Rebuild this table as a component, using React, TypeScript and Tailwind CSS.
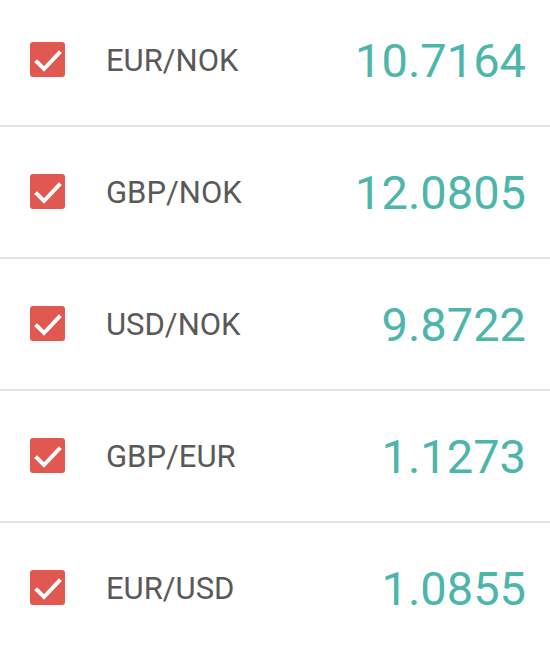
const rates = [
  { pair: "EUR/NOK", value: "10.7164" },
  { pair: "GBP/NOK", value: "12.0805" },
  { pair: "USD/NOK", value: "9.8722" },
  { pair: "GBP/EUR", value: "1.1273" },
  { pair: "EUR/USD", value: "1.0855" },
];

const Check = () => (
  <div className="w-[35px] h-[35px] rounded-[3px] bg-[#e0584f] flex items-center justify-center shrink-0">
    <svg width="35" height="35" viewBox="0 0 35 35" fill="none">
      <polyline
        points="7,20 14,27 29,11"
        stroke="white"
        strokeWidth="4"
        strokeLinecap="square"
      />
    </svg>
  </div>
);

export default function App() {
  return (
    <div className="w-[550px] h-[650px] bg-white overflow-hidden font-['Roboto',sans-serif]">
      {rates.map((r, i) => (
        <div
          key={r.pair}
          className={`flex items-center pl-[30px] pr-[24px] border-b-2 border-[#e3e3e3] ${
            i === 0 ? "h-[127px] pb-[6px]" : "h-[132px] pb-[1px]"
          }`}
        >
          <Check />
          <span className="ml-[41px] pt-[3px] text-[31px] text-[#595959]">{r.pair}</span>
          <span className="ml-auto pt-[3px] text-[47px] text-[#4db6aa]">{r.value}</span>
        </div>
      ))}
    </div>
  );
}
